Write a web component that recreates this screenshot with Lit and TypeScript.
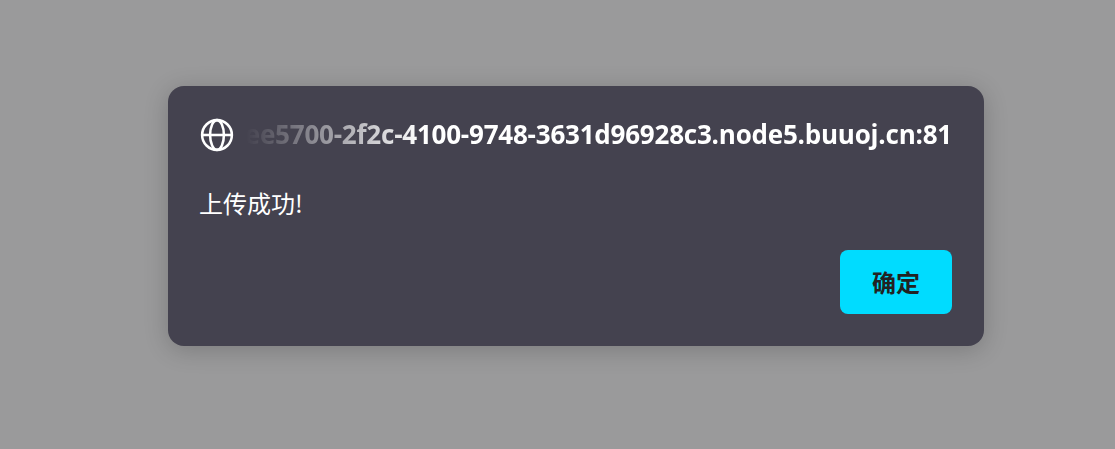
import { LitElement, html, css } from "lit";
import { customElement } from "lit/decorators.js";

@customElement("app-root")
export class AppRoot extends LitElement {
  static styles = css`
    :host { display: block; width: 1115px; height: 449px; background: #9a9a9b; font-family: "Noto Sans CJK SC", sans-serif; overflow: hidden; }
    .page { box-sizing: border-box; height: 100%; padding: 86px 0 0 168px; }
    .dialog { box-sizing: border-box; width: 816px; height: 260px; padding: 32px; background: #44424f; border-radius: 16px; box-shadow: 0 4px 24px rgba(0,0,0,.2); color: #fff; display: flex; flex-direction: column; }
    .head { display: flex; align-items: center; gap: 12px; height: 34px; }
    .head svg { flex: none; }
    .origin { flex: 1; min-width: 0; font-size: 26px; font-weight: 700; letter-spacing: -0.22px; font-family: "Open Sans", sans-serif; white-space: nowrap; overflow: hidden; direction: rtl; text-align: right; line-height: 34px; margin-top: -2px;
      -webkit-mask-image: linear-gradient(to right, transparent, #000 175px); mask-image: linear-gradient(to right, transparent, #000 175px); }
    .msg { margin-top: 34px; font-size: 24px; line-height: 34px; height: 34px; margin-left: -1px; }
    .actions { margin-top: auto; display: flex; justify-content: flex-end; }
    button { width: 112px; height: 64px; border: 0; border-radius: 8px; background: #00dcff; color: #222; font: 700 24px "Noto Sans CJK SC", sans-serif; padding: 0 0 2px; }
  `;
  render() {
    return html`<div class="page"><div class="dialog">
      <div class="head">
        <svg width="34" height="34" viewBox="0 0 32 32" fill="none" stroke="#fff" stroke-width="2.4"><circle cx="16" cy="16" r="14"/><ellipse cx="16" cy="16" rx="6.5" ry="14"/><path d="M2 16h28"/></svg>
        <div class="origin"><bdi>ee5700-2f2c-4100-9748-3631d96928c3.node5.buuoj.cn:81</bdi></div>
      </div>
      <div class="msg">上传成功!</div>
      <div class="actions"><button>确定</button></div>
    </div></div>`;
  }
}
